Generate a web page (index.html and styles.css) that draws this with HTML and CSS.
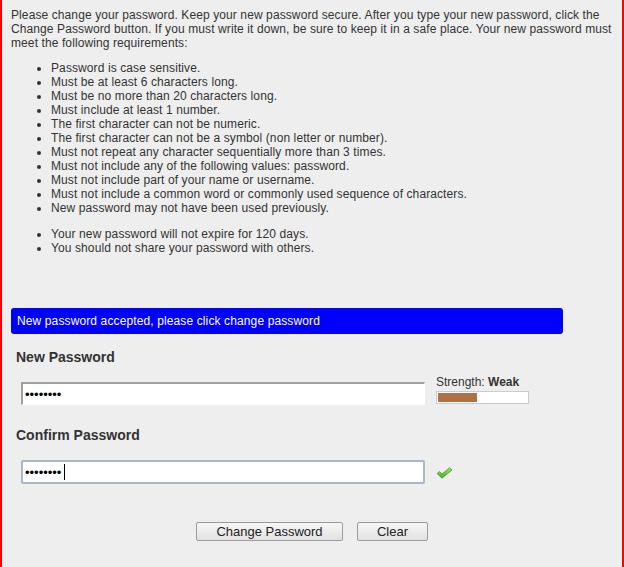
FILE: index.html
```html
<!DOCTYPE html>
<html>
<head>
<meta charset="utf-8">
<title>Change Password</title>
<link rel="stylesheet" href="styles.css">
</head>
<body>
<div class="panel">
  <p class="intro">Please change your password. Keep your new password secure. After you type your new password, click the Change Password button. If you must write it down, be sure to keep it in a safe place. Your new password must meet the following requirements:</p>
  <ul class="reqs">
    <li>Password is case sensitive.</li>
    <li>Must be at least 6 characters long.</li>
    <li>Must be no more than 20 characters long.</li>
    <li>Must include at least 1 number.</li>
    <li>The first character can not be numeric.</li>
    <li>The first character can not be a symbol (non letter or number).</li>
    <li>Must not repeat any character sequentially more than 3 times.</li>
    <li>Must not include any of the following values: password.</li>
    <li>Must not include part of your name or username.</li>
    <li>Must not include a common word or commonly used sequence of characters.</li>
    <li>New password may not have been used previously.</li>
  </ul>
  <ul class="reqs notes">
    <li>Your new password will not expire for 120 days.</li>
    <li>You should not share your password with others.</li>
  </ul>
  <div class="status">New password accepted, please click change password</div>
  <div class="form">
    <label class="field-label" for="pw1">New Password</label>
    <div class="field-row">
      <input id="pw1" class="pw" type="password" value="abcdefgh">
      <div class="strength">
        <div class="strength-text">Strength: <b>Weak</b></div>
        <div class="meter"><div class="meter-fill" style="width:39px"></div></div>
      </div>
    </div>
    <label class="field-label confirm-label" for="pw2">Confirm Password</label>
    <div class="field-row confirm-row">
      <div class="pw-wrap">
        <input id="pw2" class="pw pw-focus" type="password" value="abcdefgh">
        <span class="caret"></span>
      </div>
      <svg class="check" width="17" height="12" viewBox="0 0 17 12">
        <defs>
          <linearGradient id="g" x1="0" y1="0" x2="0" y2="1">
            <stop offset="0" stop-color="#9be86a"/>
            <stop offset="1" stop-color="#3fae22"/>
          </linearGradient>
        </defs>
        <path d="M1 6.5 L3.5 4.5 L6 7 L13.5 0.8 L16 3 L6 11.2 Z" fill="url(#g)" stroke="#4a9e2c" stroke-width="0.8" stroke-linejoin="round"/>
      </svg>
    </div>
  </div>
  <div class="actions">
    <button class="btn btn-change">Change Password</button>
    <button class="btn btn-clear">Clear</button>
  </div>
</div>
</body>
</html>
```

FILE: styles.css
```css
html, body {
  margin: 0;
  padding: 0;
  background: #eeeeee;
}
body {
  font-family: "Liberation Sans", Arial, sans-serif;
  font-size: 12px;
  color: #333333;
}
.panel {
  box-sizing: border-box;
  width: 624px;
  min-height: 567px;
  border-left: 2px solid #ff0000;
  border-right: 2px solid #ff0000;
  background: #eeeeee;
  padding: 8px 9px 20px 9px;
}
.intro {
  margin: 0;
  line-height: 14px;
  letter-spacing: 0.1px;
}
.reqs {
  margin: 11px 0 0 0;
  padding-left: 40px;
  line-height: 14px;
  letter-spacing: 0.1px;
}
.notes {
  margin-top: 12px;
}
.status {
  margin-top: 53px;
  width: 552px;
  height: 26px;
  line-height: 26px;
  box-sizing: border-box;
  padding-left: 6px;
  background: #0000ff;
  color: #ffffff;
  border-radius: 3px;
  letter-spacing: 0.12px;
}
.form {
  padding-left: 5px;
}
.field-label {
  display: block;
  margin-top: 15px;
  font-size: 14px;
  line-height: 16px;
  font-weight: bold;
  color: #333333;
}
.confirm-label {
  margin-top: 22px;
}
.field-row {
  display: flex;
  align-items: flex-end;
  gap: 11px;
  margin-top: 10px;
  margin-left: 5px;
}
.confirm-row {
  align-items: center;
  margin-top: 17px;
}
.pw {
  box-sizing: border-box;
  width: 404px;
  height: 23px;
  margin: 0;
  padding: 0 2px;
  font-family: "Liberation Sans", Arial, sans-serif;
  font-size: 13px;
  color: #000;
  background: #ffffff;
  border-style: solid;
  border-width: 2px 1px 1px 2px;
  border-color: #a0a0a0 #ffffff #ffffff #a0a0a0;
  outline: none;
}
.pw-wrap {
  position: relative;
  display: flex;
}
.pw-focus {
  height: 24px;
  border: 2px solid #a9b7cb;
  border-radius: 2px;
}
.caret {
  position: absolute;
  left: 43px;
  top: 4px;
  width: 1px;
  height: 16px;
  background: #000;
}
.strength {
  display: flex;
  flex-direction: column;
  margin-bottom: 1px;
}
.strength-text {
  line-height: 14px;
  height: 14px;
}
.meter {
  box-sizing: border-box;
  margin-top: 2px;
  width: 93px;
  height: 13px;
  border: 1px solid #cccccc;
  background: #ffffff;
  padding: 1px;
}
.meter-fill {
  height: 9px;
  background: #b07242;
}
.check {
  display: block;
  margin-top: 1px;
}
.actions {
  display: flex;
  justify-content: center;
  gap: 14px;
  margin-top: 38px;
}
.btn {
  box-sizing: border-box;
  height: 19px;
  padding: 0;
  font-family: "Liberation Sans", Arial, sans-serif;
  font-size: 13px;
  line-height: 15px;
  color: #222222;
  background: linear-gradient(#f6f6f6, #e2e2e2);
  border: 1px solid #9a9a9a;
  border-radius: 2px;
}
.btn-change {
  width: 147px;
}
.btn-clear {
  width: 71px;
}
```
